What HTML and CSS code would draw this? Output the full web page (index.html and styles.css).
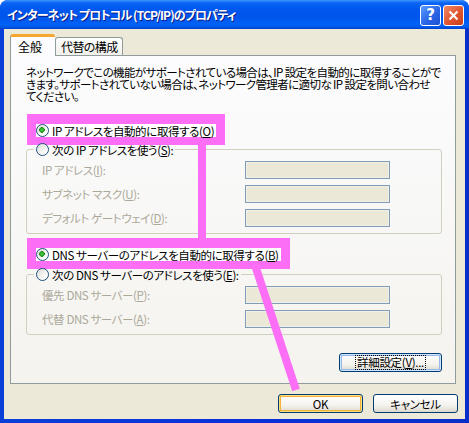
FILE: index.html
```html
<!DOCTYPE html>
<html>
<head>
    <meta charset="utf-8">
    <title>インターネット プロトコル (TCP/IP)のプロパティ</title>
    <link rel="stylesheet" href="styles.css">
</head>
<body>
<div class="window">
    <div class="titlebar">
        <span class="title">インターネット プロトコル (TCP/IP)のプロパティ</span>
        <div class="caption-buttons">
            <span class="cap-btn help">?</span>
            <span class="cap-btn close">
                <svg width="11" height="11" viewBox="0 0 11 11"><path d="M1.5 1.5 L9.5 9.5 M9.5 1.5 L1.5 9.5" stroke="#fff" stroke-width="2" fill="none"/></svg>
            </span>
        </div>
    </div>

    <div class="client">
        <div class="tabs">
            <span class="tab active">全般</span>
            <span class="tab">代替の構成</span>
        </div>

        <div class="panel">
            <p class="intro">ネットワークでこの機能がサポートされている場合は、IP 設定を自動的に取得することがで<br>きます。サポートされていない場合は、ネットワーク管理者に適切な IP 設定を問い合わせ<br>てください。</p>

            <label class="radio marked first"><span class="dot checked"></span>IP アドレスを自動的に取得する(<u>O</u>)</label>

            <fieldset class="group">
                <legend><label class="radio"><span class="dot"></span>次の IP アドレスを使う(<u>S</u>):</label></legend>
                <div class="field"><span class="field-label">IP アドレス(<u>I</u>):</span><span class="input"></span></div>
                <div class="field"><span class="field-label">サブネット マスク(<u>U</u>):</span><span class="input"></span></div>
                <div class="field"><span class="field-label">デフォルト ゲートウェイ(<u>D</u>):</span><span class="input"></span></div>
            </fieldset>

            <label class="radio marked second"><span class="dot checked"></span>DNS サーバーのアドレスを自動的に取得する(<u>B</u>)</label>

            <fieldset class="group group-dns">
                <legend><label class="radio"><span class="dot"></span>次の DNS サーバーのアドレスを使う(<u>E</u>):</label></legend>
                <div class="field"><span class="field-label">優先 DNS サーバー(<u>P</u>):</span><span class="input"></span></div>
                <div class="field"><span class="field-label">代替 DNS サーバー(<u>A</u>):</span><span class="input"></span></div>
            </fieldset>

            <div class="panel-foot">
                <button class="btn focused"><span class="focus-ring">詳細設定(<u>V</u>)...</span></button>
            </div>
        </div>

        <div class="dialog-buttons">
            <button class="btn hot marked-btn">OK</button>
            <button class="btn">キャンセル</button>
        </div>
    </div>

    <!-- callout lines drawn over the dialog -->
    <svg class="callouts" width="469" height="423" viewBox="0 0 469 423">
        <line x1="202" y1="140" x2="202" y2="243" stroke="#fb6ef5" stroke-width="8"/>
        <line x1="255" y1="265" x2="296" y2="390" stroke="#fb6ef5" stroke-width="8"/>
    </svg>
</div>
</body>
</html>
```

FILE: styles.css
```css
body {
    margin: 0;
    background: #fff;
    font-family: "Noto Sans CJK JP", "Noto Sans", sans-serif;
    font-size: 11.5px;
    font-feature-settings: "palt";
    color: #000;
}

.window {
    position: relative;
    width: 469px;
    height: 423px;
    display: flex;
    flex-direction: column;
    background: linear-gradient(to right, #0a3fd8, #0831d9 50%, #0a2fc8);
    border-radius: 8px 8px 0 0;
    overflow: hidden;
}

.titlebar {
    height: 29px;
    flex: none;
    display: flex;
    align-items: center;
    justify-content: space-between;
    padding: 0 5px 0 7px;
    background: linear-gradient(to bottom, #3d95ff 0%, #0a64f4 10%, #0058ee 30%, #0055eb 60%, #0062f7 85%, #0054e3 95%, #003dc8 100%);
}
.title {
    color: #fff;
    font-weight: bold;
    font-size: 12px;
    white-space: nowrap;
    text-shadow: 1px 1px #0a1883;
    letter-spacing: -0.9px;
}
.caption-buttons {
    display: flex;
    gap: 2px;
    margin-top: 1px;
}
.cap-btn {
    width: 21px;
    height: 21px;
    box-sizing: border-box;
    border: 1px solid #fff;
    border-radius: 3px;
    display: flex;
    align-items: center;
    justify-content: center;
    color: #fff;
    font-family: "DejaVu Sans", sans-serif;
    font-weight: bold;
    font-size: 15px;
}
.help {
    background: linear-gradient(135deg, #5b9bff, #2a66e6 55%, #1a4fd6);
}
.close {
    background: linear-gradient(135deg, #f08a66, #e0552f 55%, #c53e1a);
}

.client {
    flex: 1;
    margin: 0 4px 4px 4px;
    background: #ece9d8;
    padding: 6px 0 0 6px;
}

.tabs {
    display: flex;
    align-items: flex-end;
    height: 20px;
}
.tab {
    width: 67px;
    height: 17px;
    box-sizing: content-box;
    padding: 0 0 0 5px;
    border: 1px solid #919b9c;
    border-bottom: none;
    border-radius: 3px 3px 0 0;
    background: linear-gradient(#fefefe, #f1f0ea);
    display: flex;
    align-items: center;
    white-space: nowrap;
    font-size: 12px;
    letter-spacing: -0.6px;
}
.tab.active {
    position: relative;
    z-index: 1;
    width: 37px;
    height: 19px;
    margin-bottom: -1px;
    padding: 0 0 0 7px;
    background: #fcfcfe;
    border-top: 3px solid #f4a62f;
    border-right: none;
    letter-spacing: 0;
}
.tab + .tab {
    width: 61px;
}

.panel {
    width: 446px;
    height: 329px;
    box-sizing: border-box;
    border: 1px solid #919b9c;
    background: linear-gradient(#fcfcfe, #f4f3ee);
    padding: 10px 13px 0 15px;
}

.intro {
    margin: 0;
    line-height: 12px;
    white-space: nowrap;
    letter-spacing: -0.6px;
}

.radio {
    display: flex;
    align-items: center;
    width: fit-content;
    height: 13px;
    white-space: nowrap;
    letter-spacing: -0.4px;
}
.radio.marked {
    margin-left: 10px;
    background: #fff;
    box-shadow: 0 -1px 0 9px #fb6ef5;
    padding-right: 2px;
}
.radio.first {
    margin-top: 22px;
}
.radio.second {
    margin-top: 14px;
}
.dot {
    width: 13px;
    height: 13px;
    flex: none;
    box-sizing: border-box;
    border: 1px solid #1c5180;
    border-radius: 50%;
    margin-right: 3px;
    background: linear-gradient(135deg, #dcdcd4, #fff 80%);
}
.dot.checked {
    background: radial-gradient(circle at 45% 45%, #5dd65a 0, #21a121 2px, #1b8a1b 2.6px, transparent 3px), linear-gradient(135deg, #dcdcd4, #fff 80%);
}

.group {
    margin: 6px 0 0 0;
    padding: 0 0 6px 7px;
    border: 1px solid #d0d0bf;
    border-radius: 3px;
}
.group legend {
    padding: 0 2px;
}
.group-dns {
    margin-top: 7px;
}

.field {
    display: flex;
    align-items: center;
    margin: 5px 0 0 8px;
    height: 18px;
}
.field + .field {
    margin-top: 6px;
}
.field-label {
    width: 203px;
    color: #aca899;
    white-space: nowrap;
    letter-spacing: -0.4px;
}
.input {
    width: 145px;
    height: 18px;
    box-sizing: border-box;
    border: 1px solid #7f9db9;
    background: #ebe8d7;
    box-shadow: inset 0 0 0 1px #f2f0e6;
}

.btn {
    font-family: inherit;
    font-size: 11.5px;
    font-feature-settings: "palt";
    color: #000;
    height: 19px;
    box-sizing: border-box;
    border: 1px solid #003c74;
    border-radius: 3px;
    background: linear-gradient(#fff, #f4f3ee 60%, #dcd8cc);
    padding: 0;
    display: flex;
    align-items: center;
    justify-content: center;
    letter-spacing: -0.3px;
}
.btn.focused {
    box-shadow: inset 0 0 0 1px #cee7ff, inset 0 0 0 2px #98b8ea;
}
.btn.hot {
    box-shadow: inset 0 0 0 1px #fce07d, inset 0 0 0 2px #f5b13a;
}
.focus-ring {
    outline: 1px dotted #000;
    padding: 0 1px;
    line-height: 13px;
}

.panel-foot {
    display: flex;
    justify-content: flex-end;
    margin-top: 18px;
}
.panel-foot .btn {
    width: 103px;
}

.dialog-buttons {
    display: flex;
    justify-content: flex-end;
    gap: 10px;
    margin: 10px 7px 0 0;
}
.dialog-buttons .btn {
    width: 85px;
}
.marked-btn {
    box-shadow: inset 0 0 0 1px #fce07d, inset 0 0 0 2px #f5b13a, 0 0 0 9px #fb6ef5;
}

.callouts {
    position: absolute;
    left: 0;
    top: 0;
    pointer-events: none;
}
```
